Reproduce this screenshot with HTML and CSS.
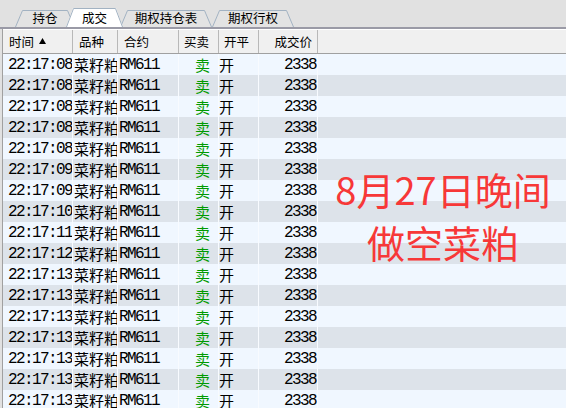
FILE: index.html
```html
<!DOCTYPE html>
<html lang="zh-CN">

<head>
    <meta charset="UTF-8">
    <meta name="viewport" content="width=device-width, initial-scale=1.0">
    <title>成交</title>
    <link rel="stylesheet" href="styles.css">
</head>

<body>
    <div class="tabbar">
        <div class="tab tab-pos">
            <svg width="60" height="17" viewBox="0 0 60 17">
                <polygon points="0,17 7,0 53,0 60,17" class="tab-fill" />
                <polyline points="0.5,17 7.5,0.5 52.5,0.5 59.5,17" class="tab-line" />
            </svg>
            <span>持仓</span>
        </div>
        <div class="tab tab-deal active">
            <svg width="57" height="19" viewBox="0 0 57 19">
                <polygon points="0,19 7,0 50,0 57,19" class="tab-fill" />
                <polyline points="0.5,19 7.5,0.5 49.5,0.5 56.5,19" class="tab-line" />
            </svg>
            <span>成交</span>
        </div>
        <div class="tab tab-opt">
            <svg width="92" height="17" viewBox="0 0 92 17">
                <polygon points="0,17 7,0 85,0 92,17" class="tab-fill" />
                <polyline points="0.5,17 7.5,0.5 84.5,0.5 91.5,17" class="tab-line" />
            </svg>
            <span>期权持仓表</span>
        </div>
        <div class="tab tab-exe">
            <svg width="82" height="17" viewBox="0 0 82 17">
                <polygon points="0,17 7,0 75,0 82,17" class="tab-fill" />
                <polyline points="0.5,17 7.5,0.5 74.5,0.5 81.5,17" class="tab-line" />
            </svg>
            <span>期权行权</span>
        </div>
    </div>

    <div class="grid">
        <div class="head">
            <div>时间<svg class="sort" width="7" height="6" viewBox="0 0 7 6"><polygon points="3.5,0 7,6 0,6" /></svg></div>
            <div>品种</div>
            <div>合约</div>
            <div class="h-side">买卖</div>
            <div class="h-side">开平</div>
            <div class="h-price">成交价</div>
            <div class="h-rest"></div>
        </div>

        <div class="rows">
            <div class="row"><div class="time">22:17:08</div><div class="name">菜籽粕</div><div class="code">RM611</div><div class="side">卖</div><div class="open">开</div><div class="price">2338</div><div></div></div>
            <div class="row"><div class="time">22:17:08</div><div class="name">菜籽粕</div><div class="code">RM611</div><div class="side">卖</div><div class="open">开</div><div class="price">2338</div><div></div></div>
            <div class="row"><div class="time">22:17:08</div><div class="name">菜籽粕</div><div class="code">RM611</div><div class="side">卖</div><div class="open">开</div><div class="price">2338</div><div></div></div>
            <div class="row"><div class="time">22:17:08</div><div class="name">菜籽粕</div><div class="code">RM611</div><div class="side">卖</div><div class="open">开</div><div class="price">2338</div><div></div></div>
            <div class="row"><div class="time">22:17:08</div><div class="name">菜籽粕</div><div class="code">RM611</div><div class="side">卖</div><div class="open">开</div><div class="price">2338</div><div></div></div>
            <div class="row"><div class="time">22:17:09</div><div class="name">菜籽粕</div><div class="code">RM611</div><div class="side">卖</div><div class="open">开</div><div class="price">2338</div><div></div></div>
            <div class="row"><div class="time">22:17:09</div><div class="name">菜籽粕</div><div class="code">RM611</div><div class="side">卖</div><div class="open">开</div><div class="price">2338</div><div></div></div>
            <div class="row"><div class="time">22:17:10</div><div class="name">菜籽粕</div><div class="code">RM611</div><div class="side">卖</div><div class="open">开</div><div class="price">2338</div><div></div></div>
            <div class="row"><div class="time">22:17:11</div><div class="name">菜籽粕</div><div class="code">RM611</div><div class="side">卖</div><div class="open">开</div><div class="price">2338</div><div></div></div>
            <div class="row"><div class="time">22:17:12</div><div class="name">菜籽粕</div><div class="code">RM611</div><div class="side">卖</div><div class="open">开</div><div class="price">2338</div><div></div></div>
            <div class="row"><div class="time">22:17:13</div><div class="name">菜籽粕</div><div class="code">RM611</div><div class="side">卖</div><div class="open">开</div><div class="price">2338</div><div></div></div>
            <div class="row"><div class="time">22:17:13</div><div class="name">菜籽粕</div><div class="code">RM611</div><div class="side">卖</div><div class="open">开</div><div class="price">2338</div><div></div></div>
            <div class="row"><div class="time">22:17:13</div><div class="name">菜籽粕</div><div class="code">RM611</div><div class="side">卖</div><div class="open">开</div><div class="price">2338</div><div></div></div>
            <div class="row"><div class="time">22:17:13</div><div class="name">菜籽粕</div><div class="code">RM611</div><div class="side">卖</div><div class="open">开</div><div class="price">2338</div><div></div></div>
            <div class="row"><div class="time">22:17:13</div><div class="name">菜籽粕</div><div class="code">RM611</div><div class="side">卖</div><div class="open">开</div><div class="price">2338</div><div></div></div>
            <div class="row"><div class="time">22:17:13</div><div class="name">菜籽粕</div><div class="code">RM611</div><div class="side">卖</div><div class="open">开</div><div class="price">2338</div><div></div></div>
            <div class="row"><div class="time">22:17:13</div><div class="name">菜籽粕</div><div class="code">RM611</div><div class="side">卖</div><div class="open">开</div><div class="price">2338</div><div></div></div>
        </div>
    </div>

    <!-- caption laid over the trade list -->
    <div class="note">8月27日晚间<br>做空菜粕</div>
</body>

</html>
```

FILE: styles.css
```css
body {
    margin: 0;
    width: 566px;
    height: 408px;
    overflow: hidden;
    position: relative;
    background: #e1e1e1;
    font-family: "Noto Sans CJK SC", sans-serif;
    color: #000;
}

/* tab strip */
.tabbar {
    height: 27px;
    border-bottom: 2px solid #9a9aa6;
    display: flex;
    align-items: flex-end;
    padding-left: 15px;
}

.tab {
    position: relative;
    isolation: isolate;
    height: 17px;
    display: flex;
    align-items: center;
    justify-content: center;
    font-size: 12.5px;
    line-height: 1;
}

.tab svg {
    position: absolute;
    left: 0;
    top: 0;
    z-index: -1;
}

.tab-fill {
    fill: #e3e3e3;
}

.tab-line {
    fill: none;
    stroke: #a2b2c2;
    stroke-width: 1;
}

.tab-pos {
    width: 60px;
}

.tab-deal {
    width: 57px;
    margin-left: -9px;
}

.tab-opt {
    width: 92px;
    margin-left: -3px;
}

.tab-exe {
    width: 82px;
}

.tab.active {
    height: 19px;
    padding-top: 2px;
    box-sizing: border-box;
    z-index: 1;
}

.tab.active .tab-fill {
    fill: #fff;
}

/* trade list */
.grid {
    margin-left: 2px;
    border-left: 1px solid #a0a0a0;
}

.head,
.row {
    display: grid;
    grid-template-columns: 70px 45px 61px 40px 40px 59px 1fr;
}

.head {
    height: 23px;
    border-top: 1px solid #fff;
    border-bottom: 1px solid #a0a0a0;
    background: #f0f0f0;
    font-size: 12.5px;
}

.head > div {
    display: flex;
    align-items: center;
    padding-left: 6px;
    border-right: 1px solid #b8b8b8;
}

.head .h-side {
    padding-left: 5px;
}

.head .h-price {
    justify-content: flex-end;
    padding-left: 0;
    padding-right: 5px;
}

.head .h-rest {
    border-right: none;
}

.sort {
    margin-left: 5px;
    margin-top: -2px;
}

.row {
    height: 21px;
    font-size: 15px;
    background: #f0f7ff;
}

.row:nth-child(even) {
    background: #dde3ea;
}

.row > div {
    display: flex;
    align-items: center;
    border-right: 1px solid #f8fbff;
    white-space: nowrap;
    overflow: hidden;
}

.row > div:last-child {
    border-right: none;
}

.time,
.code,
.price {
    font-family: "Liberation Mono", monospace;
    font-size: 16px;
    letter-spacing: -1.6px;
}

.time {
    padding-left: 5px;
}

.name {
    padding-left: 1px;
}

.code {
    padding-left: 1px;
}

.side {
    padding-left: 16px;
    color: #009a00;
}

.price {
    justify-content: flex-end;
    padding-right: 1px;
}

.note {
    position: absolute;
    left: 320px;
    top: 162px;
    width: 246px;
    text-align: center;
    color: #f73838;
    font-size: 38px;
    line-height: 53px;
}
```
